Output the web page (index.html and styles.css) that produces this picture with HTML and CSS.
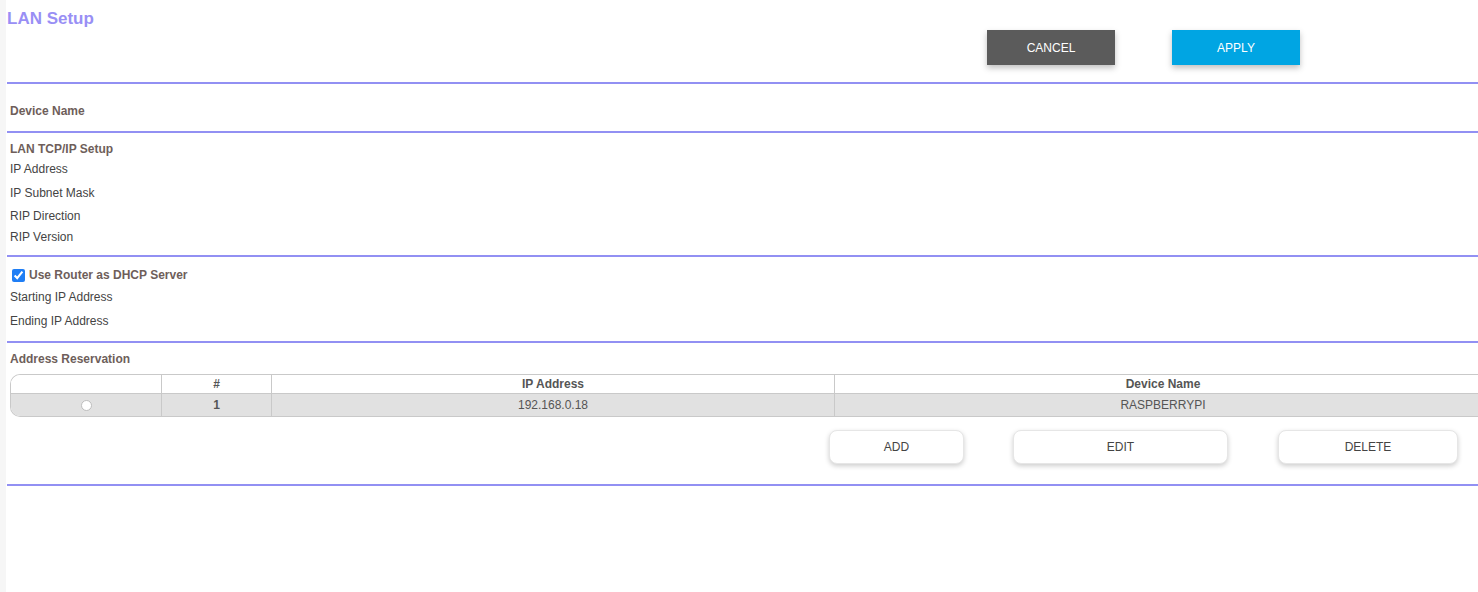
FILE: index.html
```html
<!DOCTYPE html>
<html>
<head>
<meta charset="utf-8">
<link rel="stylesheet" href="styles.css">
</head>
<body>
<div class="page">
  <div class="strip"></div>
  <main class="main">
    <h1 class="title">LAN Setup</h1>
    <div class="actions">
      <button class="btn btn-cancel">CANCEL</button>
      <button class="btn btn-apply">APPLY</button>
    </div>
    <hr class="rule rule-top">

    <section class="sec sec-device">
      <div class="label bold">Device Name</div>
    </section>
    <hr class="rule">

    <section class="sec sec-tcp">
      <div class="label bold row-head">LAN TCP/IP Setup</div>
      <div class="label row r1">IP Address</div>
      <div class="label row r2">IP Subnet Mask</div>
      <div class="label row r3">RIP Direction</div>
      <div class="label row r4">RIP Version</div>
    </section>
    <hr class="rule">

    <section class="sec sec-dhcp">
      <label class="label bold check-row"><input type="checkbox" class="check" checked> Use Router as DHCP Server</label>
      <div class="label row d1">Starting IP Address</div>
      <div class="label row d2">Ending IP Address</div>
    </section>
    <hr class="rule">

    <section class="sec sec-res">
      <div class="label bold res-head">Address Reservation</div>
      <div class="table">
        <div class="tr thead">
          <div class="td c1"></div>
          <div class="td c2">#</div>
          <div class="td c3">IP Address</div>
          <div class="td c4">Device Name</div>
        </div>
        <div class="tr tbody">
          <div class="td c1"><span class="radio"></span></div>
          <div class="td c2 num">1</div>
          <div class="td c3">192.168.0.18</div>
          <div class="td c4">RASPBERRYPI</div>
        </div>
      </div>
      <div class="res-actions">
        <button class="pill pill-add">ADD</button>
        <button class="pill pill-edit">EDIT</button>
        <button class="pill pill-del">DELETE</button>
      </div>
    </section>
    <hr class="rule">
  </main>
</div>
</body>
</html>
```

FILE: styles.css
```css
html, body {
  margin: 0;
  padding: 0;
  background: #fff;
  font-family: "Liberation Sans", Arial, sans-serif;
  overflow: hidden;
}
.page {
  display: flex;
  width: 1478px;
  height: 592px;
}
.strip {
  width: 6px;
  flex: none;
  background: #f6f6f6;
}
.main {
  flex: 1;
  padding-left: 1px;
  min-width: 0;
}
.title {
  margin: 0;
  padding-top: 10px;
  height: 20px;
  font-size: 17px;
  line-height: 17px;
  font-weight: bold;
  color: #998ff5;
}
.actions {
  display: flex;
  height: 52px;
  padding-left: 980px;
  align-items: flex-start;
}
.btn {
  width: 128px;
  height: 35px;
  border: none;
  font-family: "Liberation Sans", Arial, sans-serif;
  font-size: 12px;
  color: #fff;
  box-shadow: 0 3px 6px rgba(0,0,0,0.25);
  padding: 0;
}
.btn-cancel { background: #5b5b5b; }
.btn-apply { background: #00a5e3; margin-left: 57px; }
.rule {
  margin: 0;
  border: none;
  height: 2px;
  background: #9290f3;
  width: 1480px;
}
.label {
  font-size: 12px;
  color: #444;
  padding-left: 3px;
  line-height: 14px;
}
.bold {
  font-weight: bold;
  color: #6e5e5a;
}
.sec-device { height: 47px; box-sizing: border-box; padding-top: 20px; }
.sec-tcp { height: 122px; }
.row-head { padding-top: 9px; }
.r1 { margin-top: 6px; }
.r2 { margin-top: 10px; }
.r3 { margin-top: 9px; }
.r4 { margin-top: 7px; }
.sec-dhcp { height: 84px; }
.check-row {
  display: flex;
  align-items: center;
  gap: 4px;
  padding-top: 11px;
}
.check {
  margin: 0 0 0 2px;
  width: 13px;
  height: 13px;
  accent-color: #1f7ef5;
}
.d1 { margin-top: 8px; }
.d2 { margin-top: 10px; }
.sec-res { height: 141px; }
.res-head { padding-top: 9px; }
.table {
  margin-top: 8px;
  margin-left: 3px;
  width: 1480px;
  border: 1px solid #c9c9c9;
  border-right: none;
  border-radius: 10px 0 0 10px;
  overflow: hidden;
}
.tr { display: flex; }
.thead { height: 18px; background: #fff; border-bottom: 1px solid #c9c9c9; }
.tbody { height: 22px; background: #e1e1e1; }
.td {
  display: flex;
  align-items: center;
  justify-content: center;
  font-size: 12px;
  color: #555;
  border-right: 1px solid #c9c9c9;
}
.thead .td { font-weight: bold; color: #555; }
.num { font-weight: bold; color: #555; }
.c1 { width: 150px; }
.c2 { width: 109px; }
.c3 { width: 562px; }
.c4 { flex: 1; border-right: none; }
.radio {
  width: 11px;
  height: 11px;
  border-radius: 50%;
  background: #fff;
  border: 1px solid #bdbdbd;
  box-sizing: border-box;
}
.res-actions {
  display: flex;
  margin-top: 13px;
  padding-left: 822px;
}
.pill {
  height: 34px;
  border: 1px solid #e6e6e6;
  border-radius: 8px;
  background: #fff;
  font-family: "Liberation Sans", Arial, sans-serif;
  font-size: 12px;
  color: #444;
  box-shadow: 0 2px 5px rgba(0,0,0,0.2);
  padding: 0;
}
.pill-add { width: 135px; }
.pill-edit { width: 215px; margin-left: 49px; }
.pill-del { width: 180px; margin-left: 50px; }
```
